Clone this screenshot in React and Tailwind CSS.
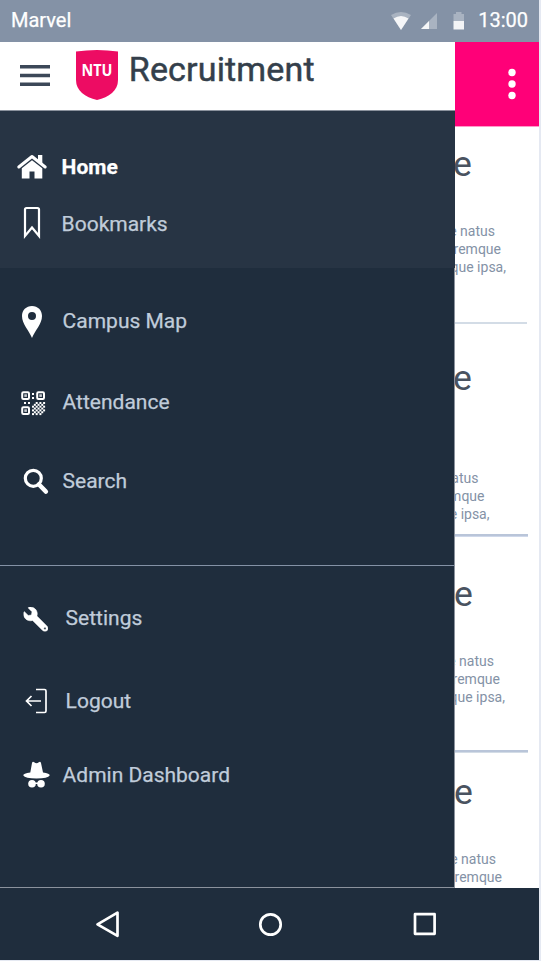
import { FaWrench } from "react-icons/fa";

function MenuRow({ top, className, label, labelClass, children }) {
  return (
    <div className={`flex h-7 items-center ${className}`}>
      <svg className="-my-2 h-11 w-[60px] shrink-0" viewBox={`0 ${top - 8} 60 44`} fill="white">
        {children}
      </svg>
      <span className={`pl-[0.6px] text-[21px] leading-7 whitespace-nowrap [-webkit-text-stroke:0.25px] ${labelClass}`}>{label}</span>
    </div>
  );
}

function Title({ className }) {
  return <h2 className={`h-10 text-[35.5px] leading-10 text-[#4a5360] ${className}`}>e</h2>;
}

function Blurb({ className, lines }) {
  const indents = ["pr-[11px]", "pr-[5px]", "pr-0"];
  return (
    <div className={`text-sm leading-[18px] text-[#8492a6] ${className}`}>
      {lines.map((line, i) => (
        <p key={line} className={`flex justify-end whitespace-nowrap ${indents[i]}`}>{line}</p>
      ))}
    </div>
  );
}

function QrEye({ x, y }) {
  return (
    <g>
      <rect x={x + 1} y={y + 1} width="6.8" height="6.8" rx="1.2" fill="none" stroke="white" strokeWidth="2" />
      <rect x={x + 3.1} y={y + 3.1} width="2.6" height="2.6" opacity=".75" />
    </g>
  );
}

const checks = [];
for (let r = 0; r < 7; r++)
  for (let c = 0; c < 7; c++)
    if ((r + c) % 2 === 0 && r + c < 11 && r + c > 0) checks.push([32 + c * 1.85, 402 + r * 1.85]);

const full = ["te natus", "oremque", "aque ipsa,"];

export default function App() {
  return (
    <div className="h-[961px] w-[541px] overflow-hidden bg-[#e5e9f2] font-[Roboto,sans-serif]">
      <div className="flex h-[960px] w-[539px] flex-col">
        <div className="flex h-[42px] shrink-0 items-center justify-between bg-[#8492a6] pr-[11px] pl-[11px] text-xl text-white [-webkit-text-stroke:0.25px]">
          <span className="-mt-0.5">Marvel</span>
          <div className="-mt-0.5 flex items-center">
            <svg className="mr-[10px] h-10 w-[80px]" viewBox="388 0 80 40" fill="white">
              <path d="M391 15Q401 9 411 15L401 30Z" opacity=".3" />
              <path d="M393.500 18.500Q401 13.500 408.500 18.500L401 30Z" opacity=".88" />
              <path d="M421 29L437 13V29Z" opacity=".3" />
              <path d="M421 29L429 21V29Z" opacity=".88" />
              <path d="M453.500 14H456V12H461.500V14H464V21H453.500Z" opacity=".3" />
              <path d="M453.500 21H464V29.500H453.500Z" opacity=".9" />
            </svg>
            <span>13:00</span>
          </div>
        </div>

        <div className="flex h-[846px] shrink-0 overflow-hidden">
          <aside className="flex w-[455px] shrink-0 flex-col">
            <header className="flex h-[69px] shrink-0 border-b border-[#8b929d] bg-white">
              <svg className="h-[68px] w-[128px] shrink-0" viewBox="0 42 128 68">
                <path d="M20 66.800H50M20 75.500H50M20 84.200H50" stroke="#3c4858" strokeWidth="3.500" />
                <path d="M76 51.500Q97 48.500 118 51.500V80C118 91 109 97 97 100C85 97 76 91 76 80Z" fill="#ed0c63" />
                <text x="97" y="76" textAnchor="middle" fontFamily="Open Sans" fontWeight="700" fontSize="16.500" textLength="31" lengthAdjust="spacingAndGlyphs" fill="white">NTU</text>
              </svg>
              <h1 className="mt-[7px] ml-[0.8px] text-[34px] leading-10 tracking-[0.16px] text-[#343f4b] [-webkit-text-stroke:0.5px]">Recruitment</h1>
            </header>

            <nav className="h-[157px] shrink-0 bg-[#273444] pt-[42px]">
              <MenuRow top={153} className="" label="Home" labelClass="ml-px font-bold text-white">
                <path d="M18.800 167L32 156.500L45.200 167" fill="none" stroke="white" strokeWidth="3" strokeLinecap="round" strokeLinejoin="round" />
                <path d="M38 155H42.300V164L38 160.500Z" />
                <path d="M21.800 168.300L32 160.300L42.300 168.300V178.500H34.500V171.500H29.500V178.500H21.800Z" />
              </MenuRow>
              <MenuRow top={210} className="mt-[29px]" label="Bookmarks" labelClass="ml-px text-[#c0ccda]">
                <path d="M25 236V209.500Q25 208 26.500 208H37.500Q39 208 39 209.500V236L32 227.500Z" fill="none" stroke="white" strokeWidth="2.200" />
              </MenuRow>
            </nav>

            <nav className="flex h-[620px] shrink-0 flex-col border-r border-b border-[#8b929d] bg-[#1f2d3d] pt-[39px]">
              <MenuRow top={307} className="" label="Campus Map" labelClass="ml-0.5 text-[#c0ccda]">
                <path fillRule="evenodd" d="M32 306C26.200 306 22 310.300 22 316C22 324 29 330.500 32 338C35 330.500 42 324 42 316C42 310.300 37.800 306 32 306ZM32 312A4 4 0 1 1 32 320A4 4 0 1 1 32 312Z" />
              </MenuRow>
              <MenuRow top={388} className="mt-[53px]" label="Attendance" labelClass="ml-0.5 text-[#c0ccda]">
                <QrEye x={21.2} y={391.2} />
                <QrEye x={36.2} y={391.2} />
                <QrEye x={21.2} y={406.2} />
                <path d="M32 393h2v2h-2zM32 397h2v2h-2zM24 402h2v2h-2zM28 402h2v2h-2z" />
                {checks.map(([x, y]) => <rect key={`${x}-${y}`} x={x} y={y} width="2" height="2" />)}
              </MenuRow>
              <MenuRow top={467} className="mt-[51px]" label="Search" labelClass="ml-0.5 text-[#c0ccda]">
                <circle cx="33.300" cy="478.300" r="8" fill="none" stroke="white" strokeWidth="3.200" />
                <path d="M39 484.500L45.800 491.500" stroke="white" strokeWidth="4.600" strokeLinecap="round" />
              </MenuRow>
              <hr className="mt-[70px] h-px border-0 bg-[#8492a6]" />
              <MenuRow top={604} className="mt-[38px]" label="Settings" labelClass="ml-[5px] text-[#c0ccda]">
                <g transform="translate(48 607) scale(-1 1)"><FaWrench x="0" y="0" size="24.500" color="white" stroke="white" strokeWidth="12" /></g>
              </MenuRow>
              <MenuRow top={687} className="mt-[55px]" label="Logout" labelClass="ml-[5px] text-[#c0ccda]">
                <path d="M36 689.500H44.500Q46 689.500 46 691V711Q46 712.500 44.500 712.500H36M41 701H26.500M31.500 696L26.500 701L31.500 706" fill="none" stroke="white" strokeWidth="1.700" />
              </MenuRow>
              <MenuRow top={761} className="mt-[46px]" label="Admin Dashboard" labelClass="ml-0.5 text-[#c0ccda]">
                <path d="M32 763Q32.700 760.800 34.200 762.300Q36.500 764.300 38.800 762.300Q40.300 760.800 41 763L43 772.500Q49.800 773.500 49.800 775.200Q48 778.500 36.500 778.500Q25 778.500 23.200 775.200Q23.200 773.500 30.300 772.500Z" />
                <circle cx="32" cy="783.700" r="3.800" /><circle cx="41" cy="783.700" r="3.800" />
                <path d="M34 782.500H39V784H34Z" />
              </MenuRow>
            </nav>
          </aside>

          <main className="w-[84px] overflow-hidden bg-white">
            <div className="flex h-[85px] items-center justify-end border-b border-[#ff99c8] bg-[#ff0078] pr-[23.500px]">
              <svg className="h-8 w-2" viewBox="0 0 8 32" fill="white">
                <circle cx="4" cy="4.500" r="3.700" /><circle cx="4" cy="16" r="3.700" /><circle cx="4" cy="27.500" r="3.700" />
              </svg>
            </div>
            <Title className="mt-[17px] -ml-[2px]" />
            <Blurb className="mt-[38px] mr-[33px]" lines={full} />
            <div className="mt-[46px] mr-3 h-0.5 bg-[#d3dce6]" />
            <Title className="mt-[34px] -ml-[2px]" />
            <Blurb className="mt-[71px] mr-[49.500px]" lines={["natus", "emque", "ue ipsa,"]} />
            <div className="mt-[11px] mr-[11px] h-0.5 border-b border-[#cfd8ea] bg-[#b9c5d9] pb-[2px]" />
            <Title className="mt-[37px] -ml-px" />
            <Blurb className="mt-[38px] mr-[34px]" lines={full} />
            <div className="mt-[44px] mr-[11px] h-[3px] border-b border-[#d3dce6] bg-[#b9c5d9]" />
            <Title className="mt-[19px] -ml-px" />
            <Blurb className="mt-[38px] mr-8" lines={full.slice(0, 2)} />
          </main>
        </div>

        <footer className="h-[72px] shrink-0 bg-[#1f2d3d]">
          <svg className="h-[72px] w-full" viewBox="0 888 539 72" fill="none" stroke="white" strokeWidth="2.700" strokeLinejoin="round">
            <path d="M97.500 924.300L117.500 912.700V935.800Z" />
            <circle cx="270.500" cy="924.500" r="10.200" />
            <rect x="415" y="914.200" width="19.600" height="19.600" />
          </svg>
        </footer>
      </div>
    </div>
  );
}
